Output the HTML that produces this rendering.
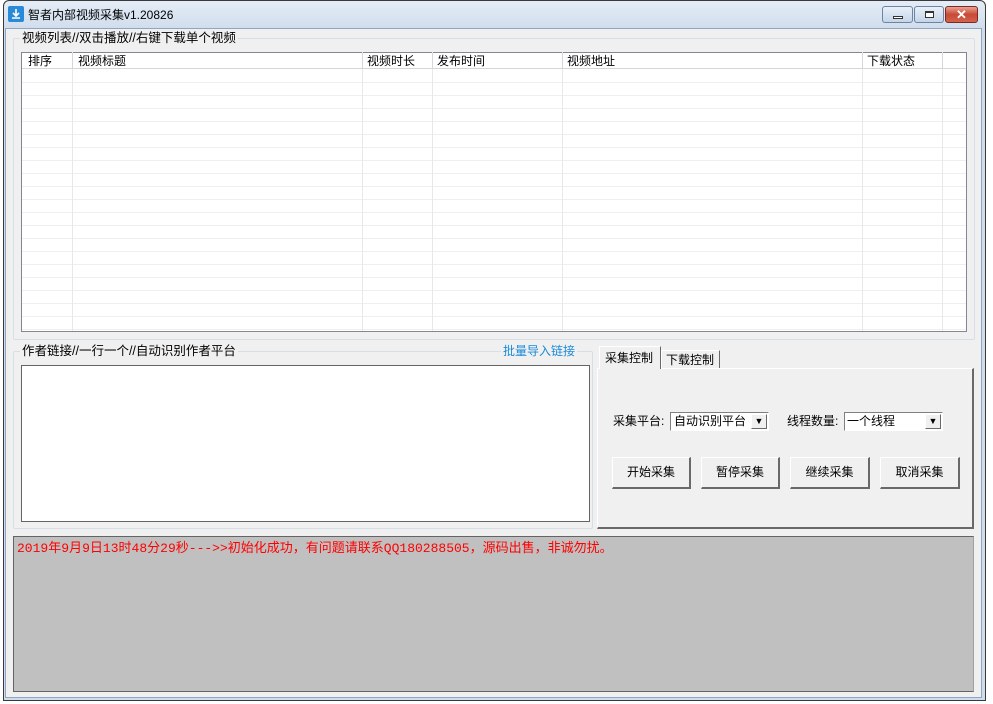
<!DOCTYPE html>
<html><head><meta charset="utf-8"><style>
*{margin:0;padding:0;box-sizing:border-box}
body{width:993px;height:704px;background:#fff;position:relative;overflow:hidden;font-family:"Liberation Sans","Noto Sans CJK SC","WenQuanYi Zen Hei",sans-serif;font-size:12px;color:#000}
.a{position:absolute}
.win{left:3px;top:0;width:983px;height:701px;border:1px solid #3a3a3a;border-radius:6px 6px 0 0;background:linear-gradient(#e4edf7,#cfdcec 30px,#cfdcec);}
.body{left:5px;top:28px;width:977px;height:670px;background:#f0f0f0;border:1px solid #8ea6c2}
.t{white-space:nowrap;line-height:14px;font-size:12px}
.grp{border:1px solid #d5dfe5;border-radius:2px}
.lbl{background:#f0f0f0;padding:0 2px}
.sunk{border-top:1px solid #808080;border-left:1px solid #808080;border-bottom:1px solid #fff;border-right:1px solid #fff;background:#fff}
.btn{background:#f0f0f0;border-top:1px solid #fff;border-left:1px solid #fff;border-right:2px solid #696969;border-bottom:2px solid #696969;text-align:center;line-height:28px;font-size:12px}
.vl{top:52px;width:1px;height:279px;background:#e8e8e8}
.hd{top:53px;height:16px;width:1px;background:#d6d6d6}
.m{font-family:"Liberation Mono",monospace;font-size:13px}
</style></head><body>
<div class="a win"></div>
<div class="a" style="left:8px;top:6px;width:16px;height:16px;background:#2a8ad8;border-radius:2px"></div>
<svg class="a" style="left:8px;top:6px" width="16" height="16"><path d="M8 3v7M5 7l3 3 3-3M4 12h8" stroke="#fff" stroke-width="1.6" fill="none"/></svg>
<div class="a t" style="left:28px;top:8px;font-size:12px">智者内部视频采集v1.20826</div>
<div class="a" style="left:882px;top:6px;width:31px;height:17px;border:1px solid #6d84a3;border-radius:3px;background:linear-gradient(#e9f0f8,#c5d5e8)"><div class="a" style="left:10px;top:9px;width:10px;height:3px;border:1px solid #333;background:#fff"></div></div>
<div class="a" style="left:914px;top:6px;width:30px;height:17px;border:1px solid #6d84a3;border-radius:3px;background:linear-gradient(#e9f0f8,#c5d5e8)"><div class="a" style="left:10px;top:4px;width:9px;height:7px;border:1px solid #333;border-top-width:2px;background:#fff"></div></div>
<div class="a" style="left:945px;top:6px;width:33px;height:17px;border:1px solid #7a2a20;border-radius:3px;background:linear-gradient(#e9a294,#c74a35 50%,#d4634e);color:#fff;font-weight:bold;text-align:center;line-height:15px;font-size:13px">✕</div>
<div class="a body"></div>

<div class="a grp" style="left:13px;top:38px;width:962px;height:302px"></div>
<div class="a t lbl" style="left:20px;top:31px;font-size:12.5px">视频列表//双击播放//右键下载单个视频</div>
<div class="a sunk" style="left:21px;top:52px;width:946px;height:280px;border-color:#828790;border-width:1px;border-style:solid;background:#fff repeating-linear-gradient(#fff 0 12px,#efefef 12px 13px);background-position:0 17px"></div>
<div class="a" style="left:22px;top:53px;width:944px;height:16px;background:#fff;border-bottom:1px solid #d6d6d6"></div>
<div class="a vl" style="left:72px"></div><div class="a vl" style="left:362px"></div><div class="a vl" style="left:432px"></div><div class="a vl" style="left:562px"></div><div class="a vl" style="left:862px"></div><div class="a vl" style="left:942px"></div>
<div class="a hd" style="left:72px"></div><div class="a hd" style="left:362px"></div><div class="a hd" style="left:432px"></div><div class="a hd" style="left:562px"></div><div class="a hd" style="left:862px"></div><div class="a hd" style="left:942px"></div>
<div class="a t" style="left:28px;top:54px">排序</div>
<div class="a t" style="left:78px;top:54px">视频标题</div>
<div class="a t" style="left:367px;top:54px">视频时长</div>
<div class="a t" style="left:437px;top:54px">发布时间</div>
<div class="a t" style="left:567px;top:54px">视频地址</div>
<div class="a t" style="left:867px;top:54px">下载状态</div>

<div class="a grp" style="left:13px;top:351px;width:580px;height:178px"></div>
<div class="a t lbl" style="left:20px;top:344px;font-size:12.5px">作者链接//一行一个//自动识别作者平台</div>
<div class="a t lbl" style="left:501px;top:344px;color:#1a8ad8">批量导入链接</div>
<div class="a" style="left:21px;top:365px;width:569px;height:157px;background:#fff;border:1px solid #646464"></div>

<div class="a" style="left:597px;top:368px;width:377px;height:161px;border-top:1px solid #fff;border-left:1px solid #fff;border-right:2px solid #696969;border-bottom:2px solid #696969"></div>
<div class="a" style="left:599px;top:346px;width:62px;height:23px;background:#f0f0f0;border-top:1px solid #fff;border-left:1px solid #fff;border-right:1px solid #696969"></div>
<div class="a t" style="left:605px;top:351px">采集控制</div>
<div class="a" style="left:661px;top:350px;width:59px;height:18px;border-right:1px solid #696969;border-left:1px solid #fff;border-top:1px solid #fff"></div>
<div class="a t" style="left:666px;top:353px">下载控制</div>

<div class="a t" style="left:613px;top:414px">采集平台:</div>
<div class="a sunk" style="left:670px;top:412px;width:99px;height:19px"></div>
<div class="a t" style="left:674px;top:414px">自动识别平台</div>
<div class="a btn" style="left:751px;top:414px;width:16px;height:15px;line-height:13px;font-size:9px;border-right-width:1px;border-bottom-width:1px">▼</div>
<div class="a t" style="left:787px;top:414px">线程数量:</div>
<div class="a sunk" style="left:844px;top:412px;width:99px;height:19px"></div>
<div class="a t" style="left:847px;top:414px">一个线程</div>
<div class="a btn" style="left:925px;top:414px;width:16px;height:15px;line-height:13px;font-size:9px;border-right-width:1px;border-bottom-width:1px">▼</div>

<div class="a btn" style="left:612px;top:457px;width:79px;height:32px">开始采集</div>
<div class="a btn" style="left:701px;top:457px;width:79px;height:32px">暂停采集</div>
<div class="a btn" style="left:790px;top:457px;width:80px;height:32px">继续采集</div>
<div class="a btn" style="left:880px;top:457px;width:80px;height:32px">取消采集</div>

<div class="a" style="left:13px;top:536px;width:961px;height:156px;background:#c0c0c0;border:1px solid #646464;border-right-color:#a0a0a0;border-bottom-color:#646464"></div>
<div class="a t" style="left:17px;top:540px;color:#f00;font-size:13px;line-height:16px"><span class="m">2019</span>年<span class="m">9</span>月<span class="m">9</span>日<span class="m">13</span>时<span class="m">48</span>分<span class="m">29</span>秒<span class="m">---&gt;&gt;</span>初始化成功，有问题请联系<span class="m">QQ180288505</span>，源码出售，非诚勿扰。</div>
</body></html>
